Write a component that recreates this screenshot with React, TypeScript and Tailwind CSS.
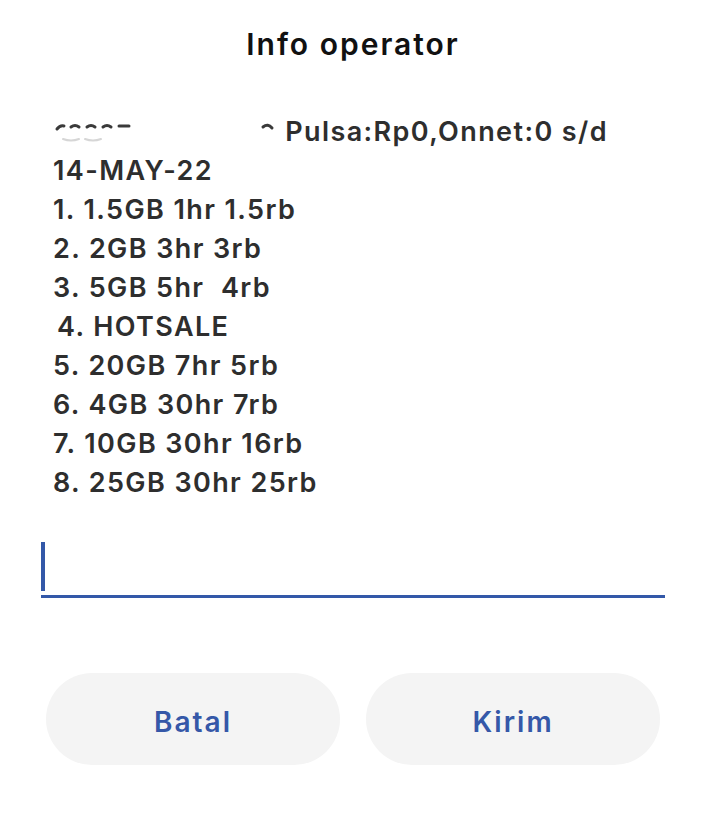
import React from "react";

const lines = [
  "14-MAY-22",
  "1. 1.5GB 1hr 1.5rb",
  "2. 2GB 3hr 3rb",
  "3. 5GB 5hr  4rb",
  "4. HOTSALE",
  "5. 20GB 7hr 5rb",
  "6. 4GB 30hr 7rb",
  "7. 10GB 30hr 16rb",
  "8. 25GB 30hr 25rb",
];

function Redacted() {
  return (
    <svg width="224" height="26" viewBox="0 0 224 26" className="inline-block align-middle shrink-0">
      <g fill="none" stroke="#3a3a3a" strokeWidth="3" strokeLinecap="round">
        <path d="M4 10 q3 -4 7 -3" />
        <path d="M18 8 q4 -3 8 0" />
        <path d="M34 8 q4 -3 8 0" />
        <path d="M50 8 q4 -3 8 0" />
        <path d="M66 7 h10" />
        <path d="M210 8 q5 -4 9 1" />
      </g>
      <g fill="none" stroke="#d6d6d6" strokeWidth="2" strokeLinecap="round">
        <path d="M10 20 q8 3 16 0" />
        <path d="M32 20 q8 3 16 0" />
      </g>
    </svg>
  );
}

export default function App() {
  return (
    <div
      className="w-[706px] h-[814px] bg-white flex flex-col"
      style={{ fontFamily: 'Inter, "Noto Sans", sans-serif' }}
    >
      <div className="pt-[24px] h-[64px] text-center text-[30px] leading-[40px] font-semibold tracking-[2px] text-[#111]">
        Info operator
      </div>
      <div className="mt-[48px] pl-[53px] text-[27px] leading-[39px] font-semibold tracking-[1.4px] text-[#2e2e2e] whitespace-pre">
        <div className="flex items-center">
          <Redacted />
          <span> Pulsa:Rp0,Onnet:0 s/d</span>
        </div>
        {lines.map((l, i) => (
          <div key={i} className={i === 4 ? "pl-[4px]" : ""}>
            {l}
          </div>
        ))}
      </div>
      <div className="mt-[40px] mx-[41px] flex flex-col">
        <div className="h-[53px] flex items-start">
          <div className="w-[4px] h-[49px] bg-[#3358a8]" />
        </div>
        <div className="h-[3px] bg-[#3358a8]" />
      </div>
      <div className="mt-[75px] px-[46px] flex gap-[26px]">
        <button className="w-[294px] h-[92px] pt-[6px] rounded-full bg-[#f4f4f4] text-[#3558a8] text-[28px] font-semibold tracking-[2px]">
          Batal
        </button>
        <button className="w-[294px] h-[92px] pt-[6px] rounded-full bg-[#f4f4f4] text-[#3558a8] text-[28px] font-semibold tracking-[2px]">
          Kirim
        </button>
      </div>
    </div>
  );
}
